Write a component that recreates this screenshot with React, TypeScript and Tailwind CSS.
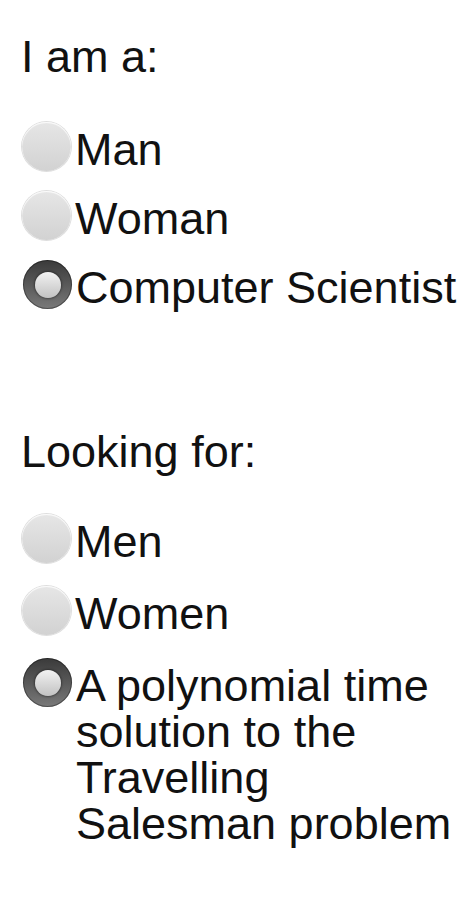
const Radio = ({ checked }: { checked?: boolean }) => {
  if (checked) {
    return (
      <div className="ml-[2px] w-[49px] h-[49px] shrink-0 rounded-full bg-linear-to-b from-[#3a3a3a] to-[#7a7a7a] shadow-[inset_0_0_0_1px_rgba(0,0,0,0.35)] flex items-center justify-center">
        <div className="w-[26px] h-[26px] rounded-full bg-linear-to-b from-[#f2f2f2] to-[#c2c2c2] shadow-[0_0_2px_1px_rgba(0,0,0,0.35)]" />
      </div>
    );
  }
  return (
    <div className="ml-[1px] w-[49px] h-[49px] shrink-0 rounded-full bg-linear-to-b from-[#e6e6e6] to-[#d2d2d2] shadow-[inset_0_1px_1px_rgba(255,255,255,0.9),0_0_0_1px_#dedede]" />
  );
};

const Option = ({
  checked,
  children,
}: {
  checked?: boolean;
  children: React.ReactNode;
}) => (
  <div className="flex items-start gap-[4px]">
    <Radio checked={checked} />
    <span className="mt-[5px] leading-[46px]">{children}</span>
  </div>
);

export default function App() {
  return (
    <div
      className="w-[462px] h-[920px] bg-white text-[#111] text-[45px] leading-[46px] pl-[21px] pr-1 pt-[34px]"
      style={{ fontFamily: '"Liberation Sans", Arial, sans-serif' }}
    >
      <h2>I am a:</h2>
      <div className="mt-[42px] flex flex-col gap-[18px]">
        <Option>Man</Option>
        <Option>Woman</Option>
        <Option checked>Computer Scientist</Option>
      </div>

      <h2 className="mt-[118px]">Looking for:</h2>
      <div className="mt-[39px] flex flex-col gap-[21px]">
        <Option>Men</Option>
        <Option>Women</Option>
        <Option checked>
          A polynomial time
          <br />
          solution to the
          <br />
          Travelling
          <br />
          Salesman problem
        </Option>
      </div>
    </div>
  );
}
